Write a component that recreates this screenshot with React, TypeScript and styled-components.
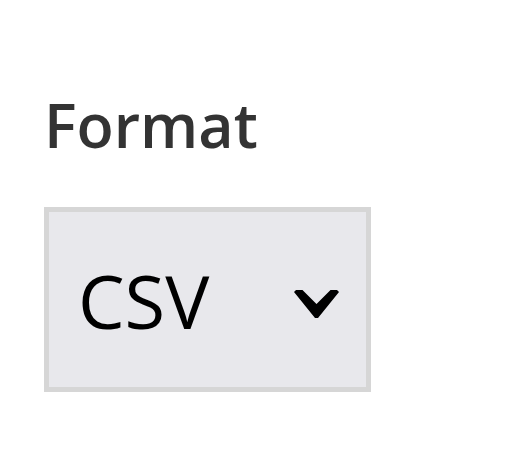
import React from "react";
import styled, { createGlobalStyle } from "styled-components";

const Global = createGlobalStyle`
  html, body { margin: 0; padding: 0; background: #ffffff; }
  body { font-family: "Open Sans", "DejaVu Sans", sans-serif; }
`;

const Page = styled.div`
  padding: 84px 0 0 44px;
  display: flex;
  flex-direction: column;
  align-items: flex-start;
`;

const Label = styled.label`
  font-family: "Open Sans", sans-serif;
  font-weight: 600;
  font-size: 61px;
  line-height: 82px;
  color: #333333;
  margin-bottom: 41px;
`;

const SelectBox = styled.button`
  box-sizing: border-box;
  width: 327px;
  height: 185px;
  border: 5px solid #d6d6d6;
  background: #e8e8ec;
  display: flex;
  align-items: center;
  justify-content: space-between;
  padding: 0 27px 0 29px;
  font-family: "Open Sans", sans-serif;
  font-size: 74px;
  color: #000000;
  cursor: pointer;
`;

const Value = styled.span`
  line-height: 1;
  margin-top: 2px;
`;

const Chevron = styled.svg`
  width: 45px;
  height: 28px;
  margin-top: 8px;
`;

export default function App() {
  return (
    <>
      <Global />
      <Page>
        <Label>Format</Label>
        <SelectBox type="button">
          <Value>CSV</Value>
          <Chevron viewBox="0 0 45 28">
            <polygon points="0,2 2,0 8.5,0 22.5,14 36.5,0 43,0 45,2 24,28 21,28" fill="#000" />
          </Chevron>
        </SelectBox>
      </Page>
    </>
  );
}
